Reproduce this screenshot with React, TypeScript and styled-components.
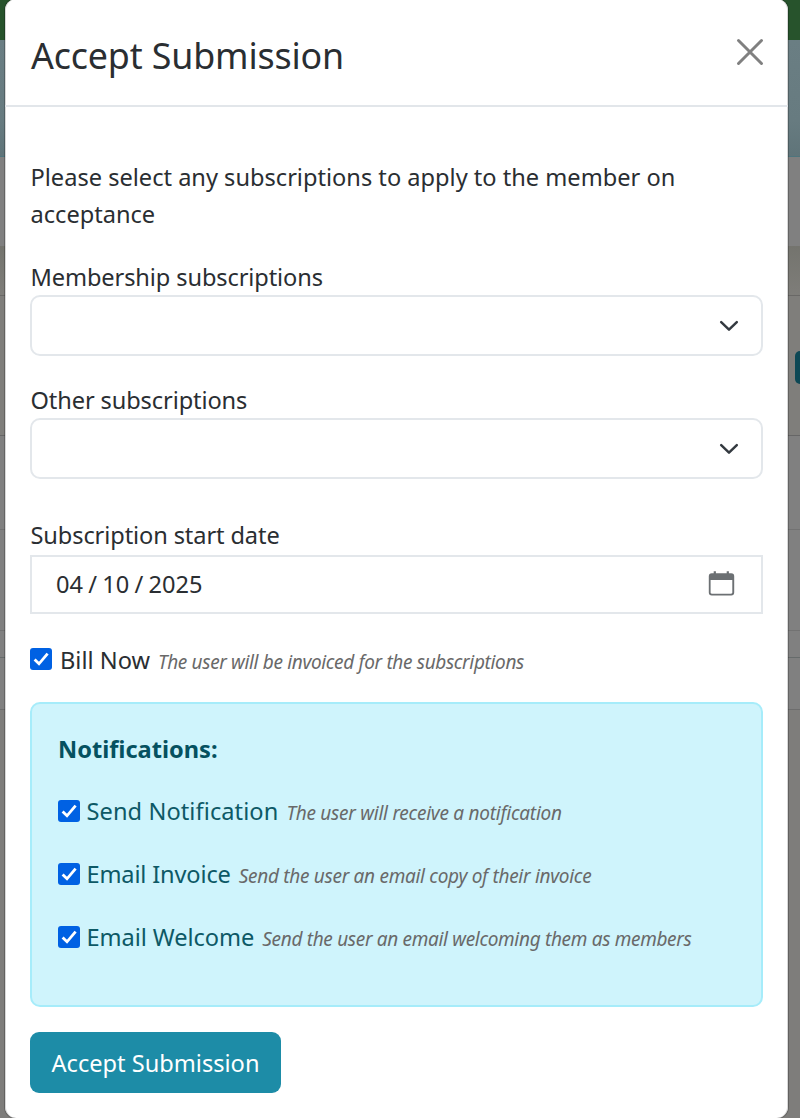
import React from 'react';
import styled, { createGlobalStyle } from 'styled-components';

const GlobalStyle = createGlobalStyle`
  * { box-sizing: border-box; }
  html, body { margin: 0; height: 100%; overflow: hidden; }
  body {
    font-family: 'Noto Sans', 'Open Sans', sans-serif;
    font-size: 23.6px;
    line-height: 37px;
    color: #2a2e32;
  }
`;

const Page = styled.div`
  position: relative;
  display: flex;
  flex-direction: column;
  width: 800px;
  height: 1118px;
  overflow: hidden;
  background: #7e7d7b;
`;

const Band = styled.div<{ $h: number; $bg: string; $line?: string }>`
  display: flex;
  justify-content: flex-end;
  align-items: center;
  flex: none;
  height: ${(p) => p.$h}px;
  background: ${(p) => p.$bg};
  border-bottom: ${(p) => (p.$line ? `1px solid ${p.$line}` : 'none')};
`;

const PageAction = styled.div`
  width: 5px;
  height: 33px;
  margin-top: 3px;
  border-radius: 8px 0 0 8px;
  background: #0d4855;
`;

const Modal = styled.div`
  position: absolute;
  left: 4px;
  top: -2px;
  width: 785px;
  height: 1121px;
  border: 1px solid rgba(0, 0, 0, 0.22);
  border-radius: 12px;
  background: #fff;
  background-clip: padding-box;
  box-shadow: inset 1px 0 0 #d8d8d8, inset -1px 0 0 #d8d8d8;
`;

const Header = styled.header`
  display: flex;
  align-items: center;
  justify-content: space-between;
  height: 108px;
  padding: 2px 22px 0 26px;
  border-bottom: 2px solid #e2e6ea;
`;

const Title = styled.h5`
  margin: 0;
  padding-top: 3px;
  font-size: 35.8px;
  font-weight: 400;
  line-height: 54px;
  letter-spacing: -0.14px;
`;

const CloseButton = styled.button`
  display: flex;
  margin: -3px 0 0;
  padding: 0;
  border: 0;
  background: none;
  color: #808080;
`;

const Body = styled.div`
  display: flex;
  flex-direction: column;
  align-items: stretch;
  padding: 52px 25px 0 25px;
`;

const Intro = styled.p`
  margin: 0 0 26px;
  padding-left: 0.5px;
`;

const Field = styled.div<{ $gap: number }>`
  display: flex;
  flex-direction: column;
  margin-bottom: ${(p) => p.$gap}px;
`;

const Label = styled.label<{ $h?: number }>`
  height: ${(p) => p.$h ?? 36}px;
  padding-left: 0.5px;
  letter-spacing: -0.11px;
`;

const Select = styled.div`
  display: flex;
  align-items: center;
  justify-content: flex-end;
  height: 61px;
  padding-right: 22px;
  border: 2px solid #e3e7eb;
  border-radius: 10px;
`;

const DateInput = styled.div`
  display: flex;
  align-items: center;
  justify-content: space-between;
  height: 59px;
  padding: 0 26px 3px 24px;
  border: 2px solid #e3e7eb;
`;

const DateValue = styled.span`
  padding-top: 3px;
  word-spacing: -0.9px;
`;

const CheckRow = styled.div`
  display: flex;
  align-items: baseline;
  height: 37px;
`;

const CheckBox = styled.span<{ $lead?: boolean }>`
  display: flex;
  align-self: flex-start;
  align-items: center;
  justify-content: center;
  width: 22px;
  height: 22px;
  margin: ${(p) => (p.$lead ? '6px 8px 0 0' : '7px 6.5px 0 0')};
  border-radius: 3px;
  background: #0061e3;
`;

const OptionLabel = styled.span<{ $tracking: number }>`
  letter-spacing: ${(p) => p.$tracking}px;
`;

const Hint = styled.em<{ $tracking: number }>`
  margin-left: 8px;
  font-size: 19px;
  letter-spacing: ${(p) => p.$tracking}px;
  color: #696969;
  white-space: nowrap;
`;

const Alert = styled.section`
  display: flex;
  flex-direction: column;
  gap: 26px;
  height: 305px;
  margin: 23px 0 25px;
  padding: 27px 26px;
  border: 2px solid #a6ecfa;
  border-radius: 10px;
  background: #cff4fc;
  color: #0d5966;
`;

const AlertTitle = styled.strong`
  height: 36px;
  font-weight: 700;
  color: #055160;
`;

const Submit = styled.button`
  align-self: flex-start;
  width: 251px;
  height: 61px;
  padding: 2px 0 0;
  border: 0;
  border-radius: 9px;
  background: #1d8ca7;
  color: #fff;
  font: inherit;
`;

const Chevron = () => (
  <svg width="20" height="20" viewBox="0 0 20 20" fill="none" stroke="#343a40" strokeWidth="2.5" strokeLinecap="round" strokeLinejoin="round">
    <path d="M2.2 6.2 10 13.600l7.800-7.400" />
  </svg>
);

const Calendar = () => (
  <svg width="27" height="27" viewBox="0 0 27 27">
    <path d="M5.7 1.2h2.2v2h10.800v-2h2.200v2h2.300a3 3 0 0 1 3 3V22.400a3 3 0 0 1-3 3H3.800a3 3 0 0 1-3-3V6.200a3 3 0 0 1 3-3h1.900zM2.600 10v12.500c0 .7.500 1.200 1.200 1.200h19.300c.7 0 1.200-.5 1.200-1.200V10z" fill="#6c7073" fillRule="evenodd" />
  </svg>
);

const CheckMark = () => (
  <svg width="18" height="18" viewBox="0 0 18 18" fill="none" stroke="#fff" strokeWidth="2.800">
    <path d="M2.600 9.500 7 13.800 15.600 3.700" />
  </svg>
);

type OptionProps = {
  label: string;
  hint: string;
  lead?: boolean;
  labelTracking?: number;
  hintTracking?: number;
};

const Option = ({ label, hint, lead, labelTracking = 0, hintTracking = -0.27 }: OptionProps) => (
  <CheckRow>
    <CheckBox $lead={lead}>
      <CheckMark />
    </CheckBox>
    <OptionLabel $tracking={labelTracking}>{label}</OptionLabel>
    <Hint $tracking={hintTracking}>{hint}</Hint>
  </CheckRow>
);

export default function App() {
  return (
    <Page>
      <GlobalStyle />
      <Band $h={40} $bg="#27532c" />
      <Band $h={117} $bg="linear-gradient(#6a7e83, #677b80 70%, #5f7479)" $line="#4e757d" />
      <Band $h={89} $bg="#808080" />
      <Band $h={50} $bg="linear-gradient(#74746e, #7e7d79)" $line="#696866" />
      <Band $h={140} $bg="#7f7e7b" $line="#666">
        <PageAction />
      </Band>
      <Band $h={94} $bg="#808080" $line="#727272" />
      <Band $h={101} $bg="#808080" $line="#727272" />
      <Band $h={27} $bg="#808080" $line="#666b6b" />
      <Band $h={52} $bg="#808080" $line="#6d6d6d" />
      <Modal>
        <Header>
          <Title>Accept Submission</Title>
          <CloseButton aria-label="Close">
            <svg width="32" height="32" viewBox="0 0 32 32" fill="none" stroke="currentColor" strokeWidth="3" strokeLinecap="round">
              <path d="M4.500 4.500l23 23M27.500 4.500l-23 23" />
            </svg>
          </CloseButton>
        </Header>
        <Body>
          <Intro>
            Please select any subscriptions to apply to the member on
            <br />
            acceptance
          </Intro>
          <Field $gap={26}>
            <Label>Membership subscriptions</Label>
            <Select><Chevron /></Select>
          </Field>
          <Field $gap={38}>
            <Label>Other subscriptions</Label>
            <Select><Chevron /></Select>
          </Field>
          <Field $gap={28}>
            <Label $h={38}>Subscription start date</Label>
            <DateInput>
              <DateValue>04 / 10 / 2025</DateValue>
              <Calendar />
            </DateInput>
          </Field>
          <Option lead label="Bill Now" hint="The user will be invoiced for the subscriptions" hintTracking={-0.34} />
          <Alert>
            <AlertTitle>Notifications:</AlertTitle>
            <Option label="Send Notification" hint="The user will receive a notification" labelTracking={0.08} hintTracking={-0.25} />
            <Option label="Email Invoice" hint="Send the user an email copy of their invoice" labelTracking={-0.16} hintTracking={-0.29} />
            <Option label="Email Welcome" hint="Send the user an email welcoming them as members" labelTracking={-0.06} hintTracking={-0.32} />
          </Alert>
          <Submit>Accept Submission</Submit>
        </Body>
      </Modal>
    </Page>
  );
}
